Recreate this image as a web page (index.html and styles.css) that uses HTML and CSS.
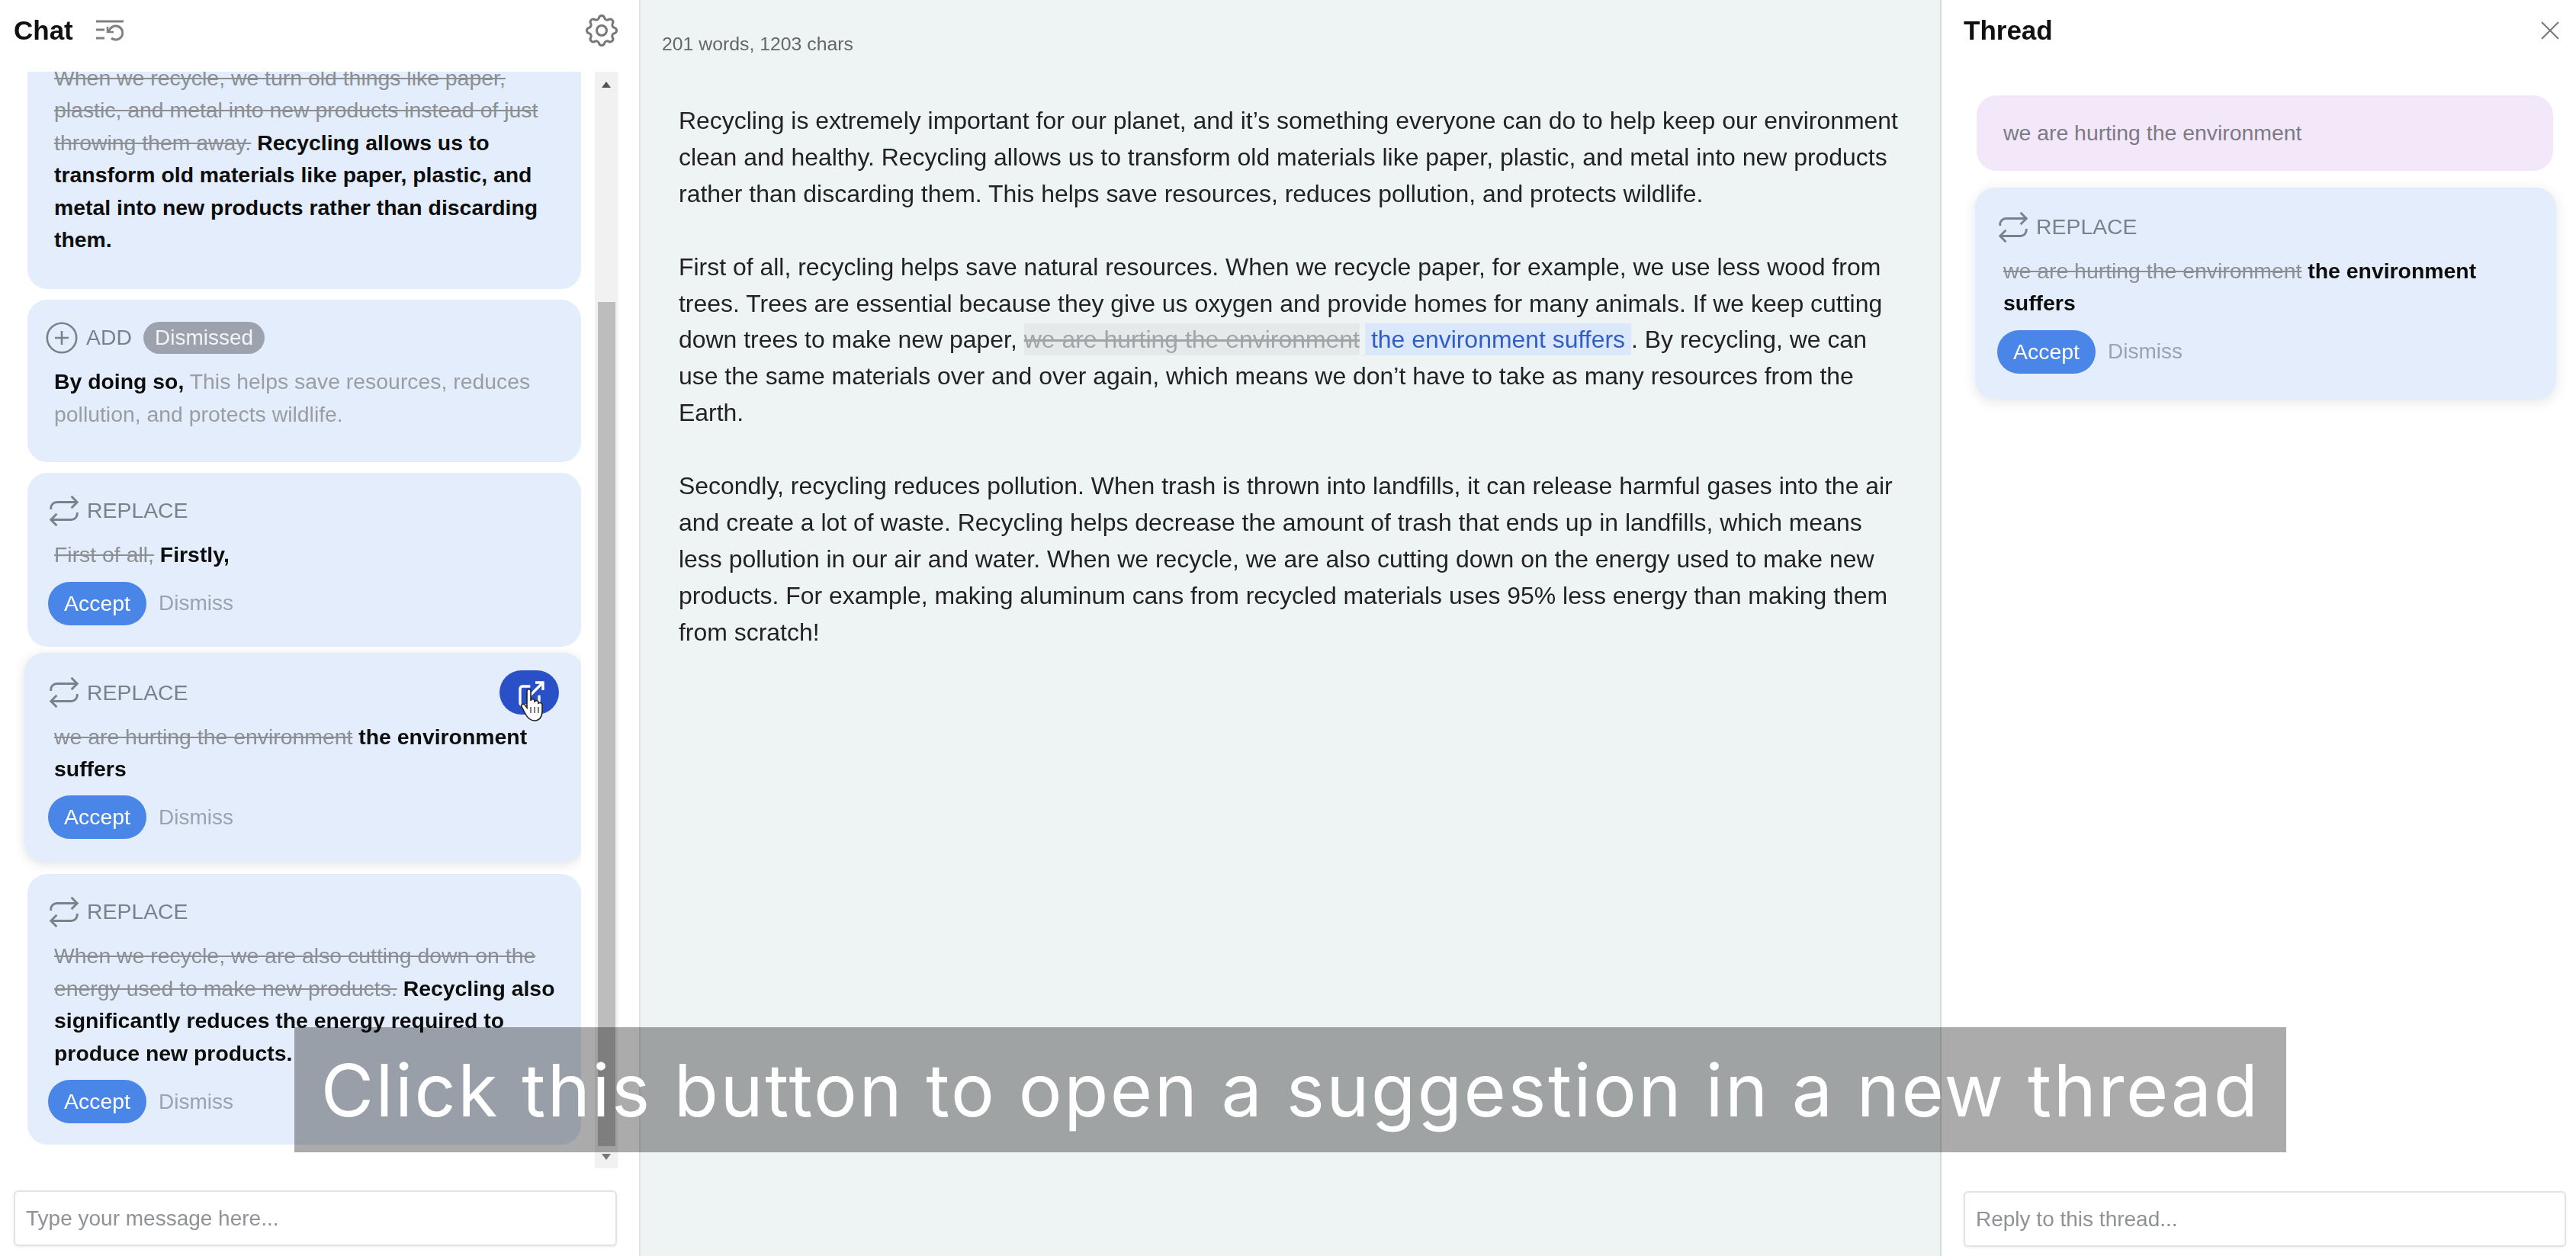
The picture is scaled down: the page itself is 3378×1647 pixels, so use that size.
FILE: index.html
```html
<!DOCTYPE html>
<html lang="en">
<head>
    <meta charset="UTF-8">
    <title>Writing assistant</title>
    <link rel="stylesheet" href="styles.css">
</head>
<body>
    <div class="app">
        <aside class="chat-panel">
            <header class="panel-header">
                <h2>Chat</h2>
                <svg class="history-icon" viewBox="0 0 36 28" fill="none" stroke="#808080" stroke-width="3">
                    <path d="M0 2h36"/>
                    <path d="M0 13h11M0 24h11"/>
                    <path d="M17 15a9 9 0 1 1 3 9"/>
                    <path d="M15 9v7h8" stroke-width="2.6"/>
                </svg>
                <svg class="gear-icon" viewBox="0 0 24 24" fill="none" stroke="#777" stroke-width="1.4">
                    <path d="M10.325 4.317c.426-1.756 2.924-1.756 3.35 0a1.724 1.724 0 002.573 1.066c1.543-.94 3.31.826 2.37 2.37a1.724 1.724 0 001.065 2.572c1.756.426 1.756 2.924 0 3.35a1.724 1.724 0 00-1.066 2.573c.94 1.543-.826 3.31-2.37 2.37a1.724 1.724 0 00-2.572 1.065c-.426 1.756-2.924 1.756-3.35 0a1.724 1.724 0 00-2.573-1.066c-1.543.94-3.31-.826-2.37-2.37a1.724 1.724 0 00-1.065-2.572c-1.756-.426-1.756-2.924 0-3.35a1.724 1.724 0 001.066-2.573c-.94-1.543.826-3.31 2.37-2.37.996.608 2.296.07 2.572-1.065z"/>
                    <circle cx="12" cy="12" r="3"/>
                </svg>
            </header>

            <div class="chat-body">
                <div class="card-list">
                    <div class="card card-first">
                        <p class="card-text"><s>When we recycle, we turn old things like paper, plastic, and metal into new products instead of just throwing them away.</s> <b>Recycling allows us to transform old materials like paper, plastic, and metal into new products rather than discarding them.</b></p>
                    </div>

                    <div class="card">
                        <div class="card-title">
                            <svg class="add-icon" viewBox="0 0 24 24" fill="none" stroke="#7b818b" stroke-width="1.3">
                                <circle cx="12" cy="12" r="9.6"/>
                                <path d="M12 7.5v9M7.5 12h9"/>
                            </svg>
                            <span>ADD</span>
                            <span class="badge">Dismissed</span>
                        </div>
                        <p class="card-text"><b>By doing so,</b> <span class="faded">This helps save resources, reduces pollution, and protects wildlife.</span></p>
                    </div>

                    <div class="card">
                        <div class="card-title">
                            <svg class="replace-icon" viewBox="0 0 24 24"><use href="#repeat"/></svg>
                            <span>REPLACE</span>
                        </div>
                        <p class="card-text"><s>First of all,</s> <b>Firstly,</b></p>
                        <div class="card-actions">
                            <button class="accept-btn">Accept</button>
                            <button class="dismiss-btn">Dismiss</button>
                        </div>
                    </div>

                    <div class="card card-active">
                        <div class="card-title">
                            <svg class="replace-icon" viewBox="0 0 24 24"><use href="#repeat"/></svg>
                            <span>REPLACE</span>
                        </div>
                        <div class="open-thread">
                            <svg class="open-icon" viewBox="0 0 24 24" fill="none" stroke="#fff" stroke-width="2">
                                <path d="M18 13v6a2 2 0 0 1-2 2H5a2 2 0 0 1-2-2V8a2 2 0 0 1 2-2h6"/>
                                <path d="M15 3h6v6M10 14 21 3"/>
                            </svg>
                            <svg class="hand-cursor" viewBox="0 0 30 44">
                                <path d="M8 3c0-3 5-3 5 0v13c0-3 5-3 5 0v2c0-3 5-3 5 0v2c0-2.500 5-2 5 1v9c0 6-3 12-10 12-6 0-9-3-12-9l-5-9c-1.500-3 2-5 4-3l3 4z" fill="#fff" stroke="#222" stroke-width="1.6"/>
                                <path d="M13 24v8M18 24v8M23 24v8" stroke="#444" stroke-width="1.4"/>
                            </svg>
                        </div>
                        <p class="card-text"><s>we are hurting the environment</s> <b>the environment suffers</b></p>
                        <div class="card-actions">
                            <button class="accept-btn">Accept</button>
                            <button class="dismiss-btn">Dismiss</button>
                        </div>
                    </div>

                    <div class="card">
                        <div class="card-title">
                            <svg class="replace-icon" viewBox="0 0 24 24"><use href="#repeat"/></svg>
                            <span>REPLACE</span>
                        </div>
                        <p class="card-text"><s>When we recycle, we are also cutting down on the energy used to make new products.</s> <b>Recycling also significantly reduces the energy required to produce new products.</b></p>
                        <div class="card-actions">
                            <button class="accept-btn">Accept</button>
                            <button class="dismiss-btn">Dismiss</button>
                        </div>
                    </div>
                </div>

                <div class="scrollbar">
                    <span class="arrow-up"></span>
                    <div class="scroll-thumb"></div>
                    <span class="arrow-down"></span>
                </div>
            </div>

            <div class="composer chat-composer">
                <input type="text" placeholder="Type your message here...">
            </div>
        </aside>

        <main class="editor-panel">
            <div class="word-count">201 words, 1203 chars</div>
            <div class="editor">
                <p>Recycling is extremely important for our planet, and it’s something everyone can do to help keep our environment clean and healthy. Recycling allows us to transform old materials like paper, plastic, and metal into new products rather than discarding them. This helps save resources, reduces pollution, and protects wildlife.</p>
                <p>First of all, recycling helps save natural resources. When we recycle paper, for example, we use less wood from trees. Trees are essential because they give us oxygen and provide homes for many animals. If we keep cutting down trees to make new paper, <span class="deleted">we are hurting the environment</span> <span class="inserted">the environment suffers</span>. By recycling, we can use the same materials over and over again, which means we don’t have to take as many resources from the Earth.</p>
                <p>Secondly, recycling reduces pollution. When trash is thrown into landfills, it can release harmful gases into the air and create a lot of waste. Recycling helps decrease the amount of trash that ends up in landfills, which means less pollution in our air and water. When we recycle, we are also cutting down on the energy used to make new products. For example, making aluminum cans from recycled materials uses 95% less energy than making them from scratch!</p>
            </div>
        </main>

        <aside class="thread-panel">
            <header class="panel-header thread-header">
                <h2>Thread</h2>
                <svg class="close-icon" viewBox="0 0 24 24" fill="none" stroke="#777" stroke-width="2">
                    <path d="M1 1l22 22M23 1 1 23"/>
                </svg>
            </header>
            <div class="thread-body">
                <div class="quote-card">we are hurting the environment</div>
                <div class="card card-thread">
                    <div class="card-title">
                        <svg class="replace-icon" viewBox="0 0 24 24"><use href="#repeat"/></svg>
                        <span>REPLACE</span>
                    </div>
                    <p class="card-text"><s>we are hurting the environment</s> <b>the environment suffers</b></p>
                    <div class="card-actions">
                        <button class="accept-btn">Accept</button>
                        <button class="dismiss-btn">Dismiss</button>
                    </div>
                </div>
            </div>
            <div class="composer thread-composer">
                <input type="text" placeholder="Reply to this thread...">
            </div>
        </aside>

        <div class="caption">Click this button to open a suggestion in a new thread</div>
    </div>

    <svg class="icon-defs" width="0" height="0">
        <symbol id="repeat" viewBox="0 0 24 24" fill="none" stroke="#7b818b" stroke-width="1.5">
            <path d="M17 2l4 4-4 4"/>
            <path d="M3 11v-1a4 4 0 0 1 4-4h14"/>
            <path d="M7 22l-4-4 4-4"/>
            <path d="M21 13v1a4 4 0 0 1-4 4H3"/>
        </symbol>
    </svg>
</body>
</html>
```

FILE: styles.css
```css
* {
    margin: 0;
    padding: 0;
    box-sizing: border-box;
    font-family: "Liberation Sans", Arial, sans-serif;
}

body {
    background: #fff;
    color: #222;
    overflow: hidden;
}

.app {
    position: relative;
    display: flex;
    height: 100vh;
    overflow: hidden;
}

.icon-defs {
    position: absolute;
}

/* Panels - the source is a video frame, hence the slight blur */

.chat-panel,
.editor-panel,
.thread-panel {
    filter: blur(0.6px);
}

.chat-panel {
    width: 840px;
    flex-shrink: 0;
    display: flex;
    flex-direction: column;
    border-right: 2px solid #dde3e3;
}

.editor-panel {
    flex: 1;
    background: #eef3f3;
    padding: 44px 28px 0;
}

.thread-panel {
    width: 834px;
    flex-shrink: 0;
    display: flex;
    flex-direction: column;
    border-left: 2px solid #d5dcdc;
}

.panel-header {
    height: 94px;
    flex-shrink: 0;
    display: flex;
    align-items: center;
    padding: 0 28px 14px 18px;
}

.panel-header h2 {
    font-size: 35px;
    font-weight: 700;
    color: #111;
}

.history-icon {
    width: 36px;
    height: 28px;
    margin-left: 30px;
}

.gear-icon {
    width: 52px;
    height: 52px;
    margin-left: auto;
    margin-right: -5px;
}

.thread-header {
    justify-content: space-between;
    padding: 0 22px 15px 29px;
}

.close-icon {
    width: 24px;
    height: 24px;
}

/* Suggestion list */

.chat-body {
    height: 1438px;
    display: flex;
}

.card-list {
    width: 762px;
    flex-shrink: 0;
    overflow: hidden;
    padding-left: 36px;
    display: flex;
    flex-direction: column;
    gap: 14px;
}

.card {
    position: relative;
    flex-shrink: 0;
    background: #e4edfb;
    border-radius: 26px;
    padding: 24px 30px 28px 35px;
}

.card-first {
    margin-top: -13px;
    padding-top: 0;
    padding-bottom: 30px;
    border-radius: 0 0 26px 26px;
}

.card-active {
    margin: -6px -3px 2px -4px;
    padding: 27px 33px 30px 39px;
    box-shadow: 0 3px 14px rgba(60, 70, 90, 0.16);
}

.card-thread {
    padding: 26px 30px 33px 37px;
    margin: 0 -4px 0 -2px;
    box-shadow: 0 4px 16px rgba(60, 70, 90, 0.14);
}

.card-title {
    height: 50px;
    padding-top: 1px;
    margin-bottom: 12px;
    display: flex;
    align-items: center;
    font-size: 28.4px;
    color: #7b818b;
}

.replace-icon {
    width: 46px;
    height: 46px;
    margin-left: -10px;
    margin-right: 7px;
}

.add-icon {
    width: 48px;
    height: 48px;
    margin-left: -14px;
    margin-right: 8px;
}

.badge {
    margin-left: 15px;
    padding: 0 15px;
    height: 42px;
    line-height: 41px;
    border-radius: 21px;
    background: #9ca3af;
    color: #f1f4f8;
    font-size: 28px;
}

.card-text {
    font-size: 28.4px;
    line-height: 42.4px;
    margin-bottom: 14px;
}

.card-text s {
    color: #8b8f94;
}

.card-text b {
    color: #0d0d0d;
}

.faded {
    color: #9a9ea4;
}

.card-actions {
    display: flex;
    align-items: center;
    gap: 16px;
    margin-left: -8px;
}

.accept-btn {
    width: 129px;
    height: 57px;
    border: none;
    border-radius: 29px;
    background: #4a86e8;
    color: #fff;
    font-size: 28.4px;
}

.dismiss-btn {
    border: none;
    background: none;
    color: #9ca3af;
    font-size: 28px;
}

.open-thread {
    position: absolute;
    top: 23px;
    right: 32px;
    width: 78px;
    height: 58px;
    border-radius: 29px;
    background: #2a50c8;
}

.open-icon {
    position: absolute;
    left: 22px;
    top: 11px;
    width: 40px;
    height: 40px;
}

.hand-cursor {
    position: absolute;
    left: 27px;
    top: 24px;
    width: 32px;
    height: 44px;
}

/* Fake scrollbar */

.scrollbar {
    width: 30px;
    margin-left: 18px;
    background: #f1f1f1;
    display: flex;
    flex-direction: column;
    align-items: center;
}

.arrow-up,
.arrow-down {
    width: 0;
    height: 0;
    border-left: 6px solid transparent;
    border-right: 6px solid transparent;
}

.arrow-up {
    margin-top: 13px;
    border-bottom: 8px solid #555;
}

.arrow-down {
    margin-top: 10px;
    border-top: 8px solid #777;
}

.scroll-thumb {
    width: 23px;
    height: 1107px;
    margin-top: 281px;
    background: #bdbdbd;
}

/* Inputs */

.composer input {
    display: block;
    height: 73px;
    background: #fff;
    border: 2px solid #e3e3e3;
    border-radius: 6px;
    padding: 0 14px;
    font-size: 28px;
    box-shadow: 0 1px 3px rgba(0, 0, 0, 0.08);
}

.composer input::placeholder {
    color: #8f9296;
}

.chat-composer {
    padding: 29px 29px 0 18px;
}

.chat-composer input {
    width: 791px;
}

.thread-composer {
    padding: 0 13px 12px 29px;
}

.thread-composer input {
    width: 790px;
}

/* Editor */

.word-count {
    font-size: 24.8px;
    line-height: 28px;
    color: #666;
}

.editor {
    margin-top: 63px;
    margin-left: 22px;
    width: 1603px;
    font-size: 31.95px;
    line-height: 47.9px;
    color: #222;
}

.editor p {
    margin-bottom: 47.9px;
}

.deleted {
    background: #e6e9ea;
    color: #a2a5a8;
    padding: 3px 0;
    text-decoration: line-through;
}

.inserted {
    background: #dbe7fb;
    color: #2f5fc4;
    padding: 3px 8px;
    margin-left: -2px;
}

/* Thread */

.thread-body {
    flex: 1;
    padding: 31px 30px 0 46px;
}

.quote-card {
    height: 99px;
    line-height: 99px;
    margin-bottom: 22px;
    padding-left: 35px;
    border-radius: 26px;
    background: #f3e8fa;
    color: #7d7a85;
    font-size: 28.4px;
}

/* Tutorial caption over the video */

.caption {
    position: absolute;
    left: 386px;
    top: 1347px;
    width: 2612px;
    height: 164px;
    display: flex;
    align-items: center;
    justify-content: center;
    background: rgba(0, 0, 0, 0.33);
    color: #fff;
    font-family: Inter, sans-serif;
    font-size: 95px;
    font-weight: 400;
    letter-spacing: 2.5px;
    white-space: nowrap;
}
```
